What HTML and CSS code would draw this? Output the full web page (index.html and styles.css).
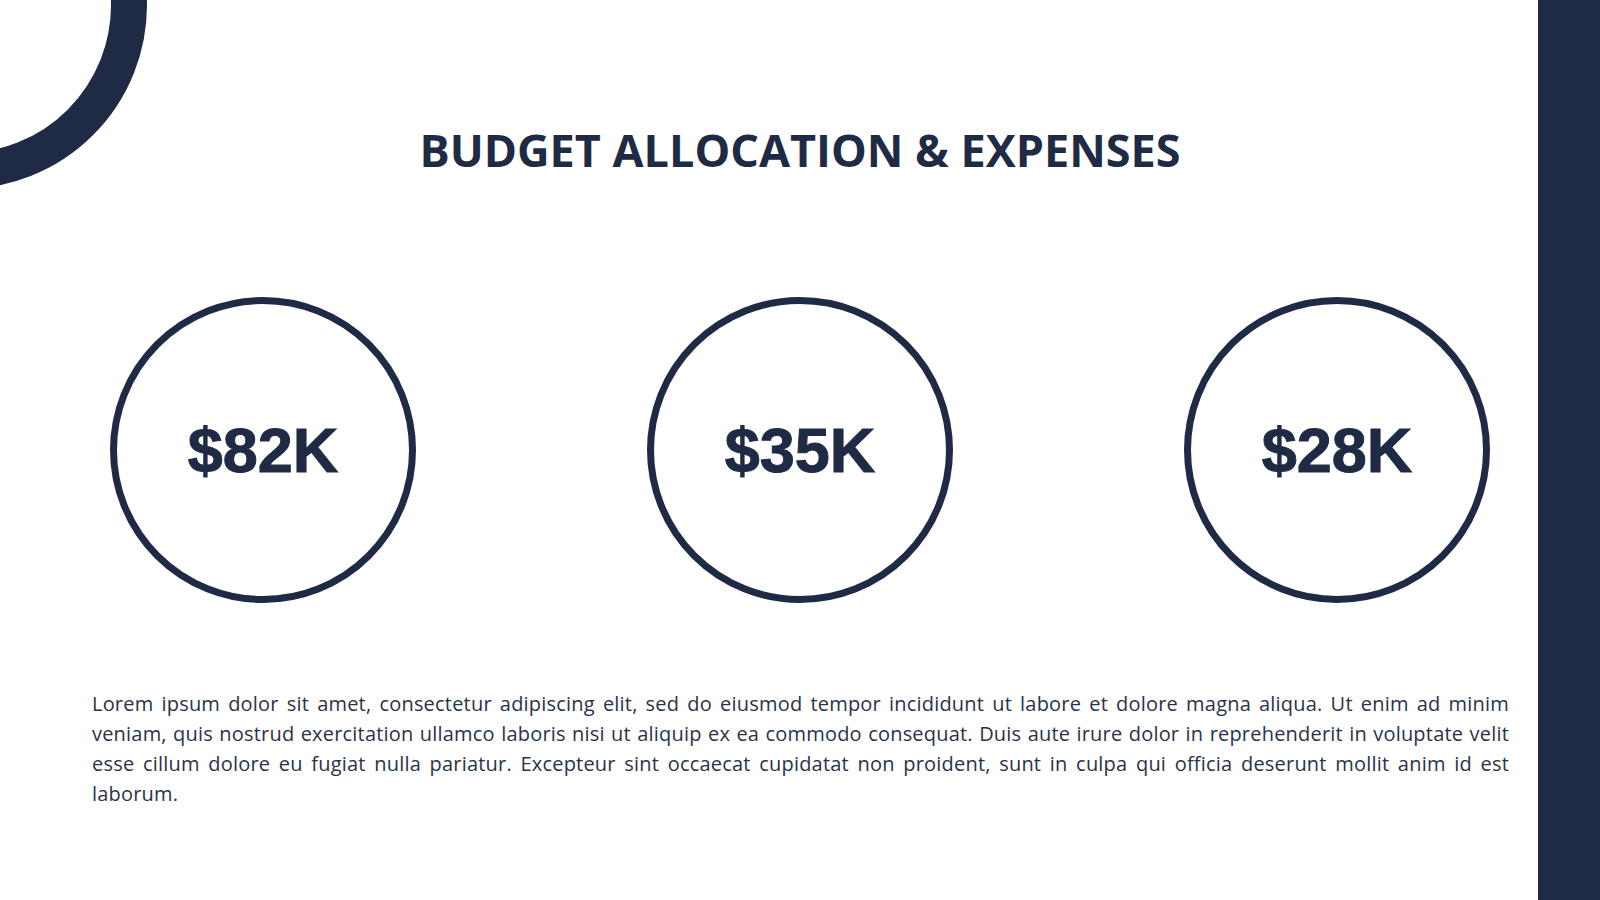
FILE: index.html
```html
<!DOCTYPE html>
<html lang="en">
<head>
<meta charset="utf-8">
<title>Budget Allocation &amp; Expenses</title>
<link rel="stylesheet" href="styles.css">
</head>
<body>
<div class="slide">
  <div class="corner-ring"></div>
  <main class="content">
    <h1 class="title">BUDGET ALLOCATION &amp; EXPENSES</h1>
    <div class="stats">
      <div class="stat"><span class="stat-value">$82K</span></div>
      <div class="stat"><span class="stat-value">$35K</span></div>
      <div class="stat"><span class="stat-value">$28K</span></div>
    </div>
    <p class="desc">Lorem ipsum dolor sit amet, consectetur adipiscing elit, sed do eiusmod tempor incididunt ut labore et dolore magna aliqua. Ut enim ad minim veniam, quis nostrud exercitation ullamco laboris nisi ut aliquip ex ea commodo consequat. Duis aute irure dolor in reprehenderit in voluptate velit esse cillum dolore eu fugiat nulla pariatur. Excepteur sint occaecat cupidatat non proident, sunt in culpa qui officia deserunt mollit anim id est laborum.</p>
  </main>
  <aside class="side-bar"></aside>
</div>
</body>
</html>
```

FILE: styles.css
```css
* { box-sizing: border-box; }

html, body {
  margin: 0;
  padding: 0;
  background: #ffffff;
}

.slide {
  position: relative;
  width: 1600px;
  height: 900px;
  overflow: hidden;
  display: grid;
  grid-template-columns: 1fr 62px;
  color: #1f2a44;
}

.corner-ring {
  position: absolute;
  left: -221px;
  top: -179px;
  width: 368px;
  height: 368px;
  border: 36px solid #1f2a44;
  border-radius: 50%;
}

.content {
  padding: 122px 0 0 62px;
  display: flex;
  flex-direction: column;
}

.title {
  margin: 0;
  text-align: center;
  font-family: "Open Sans", "Liberation Sans", sans-serif;
  font-weight: 700;
  font-size: 45px;
  line-height: 55px;
  letter-spacing: 0;
}

.stats {
  margin: 120px 48px 0 48px;
  display: flex;
  justify-content: space-between;
}

.stat {
  width: 306px;
  height: 306px;
  border: 7px solid #1f2a44;
  border-radius: 50%;
  display: flex;
  align-items: center;
  justify-content: center;
}

.stat-value {
  font-family: "Liberation Sans", Arial, sans-serif;
  font-weight: 700;
  font-size: 63px;
  line-height: 1;
  -webkit-text-stroke: 1px #1f2a44;
}

.desc {
  margin: 86px 29px 0 30px;
  font-family: "Open Sans", "Liberation Sans", sans-serif;
  font-size: 20px;
  line-height: 30px;
  letter-spacing: 0.2px;
  text-align: justify;
  color: #2a3349;
}

.side-bar {
  background: #1f2a44;
}
```
